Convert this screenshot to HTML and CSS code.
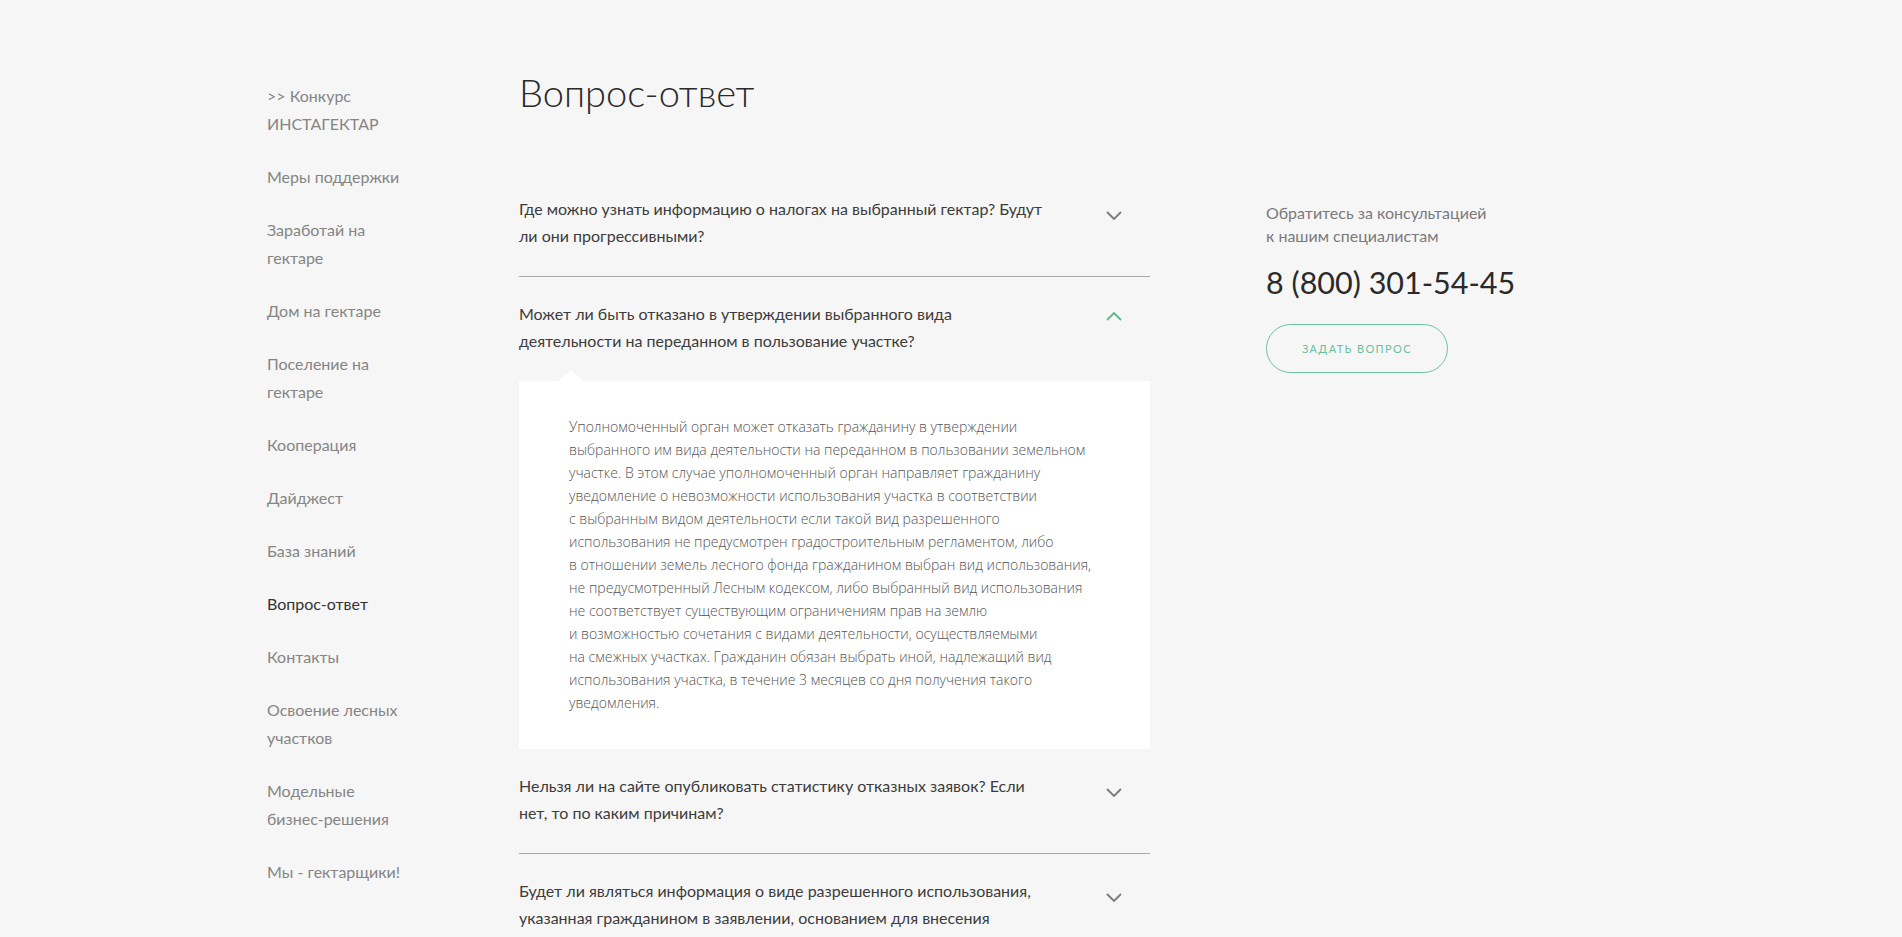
FILE: index.html
```html
<!DOCTYPE html>
<html lang="ru">
<head>
<meta charset="utf-8">
<title>Вопрос-ответ</title>
<link rel="stylesheet" href="styles.css">
</head>
<body>
<div class="page">
  <nav class="side">
    <a class="side-link" href="#">&gt;&gt; Конкурс ИНСТАГЕКТАР</a>
    <a class="side-link" href="#"><span class="nowrap">Меры поддержки</span></a>
    <a class="side-link" href="#">Заработай на гектаре</a>
    <a class="side-link" href="#"><span class="nowrap">Дом на гектаре</span></a>
    <a class="side-link" href="#">Поселение на гектаре</a>
    <a class="side-link" href="#">Кооперация</a>
    <a class="side-link" href="#">Дайджест</a>
    <a class="side-link" href="#">База знаний</a>
    <a class="side-link active" href="#">Вопрос-ответ</a>
    <a class="side-link" href="#">Контакты</a>
    <a class="side-link" href="#"><span class="nowrap">Освоение лесных</span> участков</a>
    <a class="side-link" href="#">Модельные <span class="nowrap">бизнес-решения</span></a>
    <a class="side-link" href="#"><span class="nowrap">Мы - гектарщики!</span></a>
  </nav>
  <main class="main">
    <h1 class="title">Вопрос-ответ</h1>
    <div class="row">
      <div class="faq">
        <div class="item">
          <div class="q">
            <div class="q-text">Где можно узнать информацию о налогах на выбранный гектар? Будут ли они прогрессивными?</div>
            <svg class="chev" width="16" height="9" viewBox="0 0 16 9"><path d="M1 1 L8 8 L15 1" fill="none" stroke="#7a7a7a" stroke-width="1.8"/></svg>
          </div>
        </div>
        <div class="item open">
          <div class="q">
            <div class="q-text">Может ли быть отказано в утверждении выбранного вида деятельности на переданном в пользование участке?</div>
            <svg class="chev chev-up" width="16" height="9" viewBox="0 0 16 9"><path d="M1 8 L8 1 L15 8" fill="none" stroke="#5cb893" stroke-width="1.8"/></svg>
          </div>
          <div class="answer">
            <p class="answer-text">Уполномоченный орган может отказать гражданину в&nbsp;утверждении<br>выбранного им вида деятельности на переданном в&nbsp;пользовании земельном<br>участке. В&nbsp;этом случае уполномоченный орган направляет гражданину<br>уведомление о&nbsp;невозможности использования участка в&nbsp;соответствии<br>с&nbsp;выбранным видом деятельности если такой вид разрешенного<br>использования не&nbsp;предусмотрен градостроительным регламентом, либо<br>в&nbsp;отношении земель лесного фонда гражданином выбран вид использования,<br>не&nbsp;предусмотренный Лесным кодексом, либо выбранный вид использования<br>не&nbsp;соответствует существующим ограничениям прав на&nbsp;землю<br>и&nbsp;возможностью сочетания с&nbsp;видами деятельности, осуществляемыми<br>на&nbsp;смежных участках. Гражданин обязан выбрать иной, надлежащий вид<br>использования участка, в&nbsp;течение 3&nbsp;месяцев со&nbsp;дня получения такого<br>уведомления.</p>
          </div>
        </div>
        <div class="item">
          <div class="q">
            <div class="q-text">Нельзя ли на сайте опубликовать статистику отказных заявок? Если нет, то по каким причинам?</div>
            <svg class="chev" width="16" height="9" viewBox="0 0 16 9"><path d="M1 1 L8 8 L15 1" fill="none" stroke="#7a7a7a" stroke-width="1.8"/></svg>
          </div>
        </div>
        <div class="item">
          <div class="q">
            <div class="q-text">Будет ли являться информация о виде разрешенного использования, указанная гражданином в заявлении, основанием для внесения</div>
            <svg class="chev" width="16" height="9" viewBox="0 0 16 9"><path d="M1 1 L8 8 L15 1" fill="none" stroke="#7a7a7a" stroke-width="1.8"/></svg>
          </div>
        </div>
      </div>
      <aside class="aside">
        <p class="aside-text">Обратитесь за консультацией<br>к нашим специалистам</p>
        <div class="phone">8 (800) 301-54-45</div>
        <a class="btn" href="#">Задать вопрос</a>
      </aside>
    </div>
  </main>
</div>
</body>
</html>
```

FILE: styles.css
```css
html, body {
  margin: 0;
  padding: 0;
  background: #f6f6f6;
}
body {
  font-family: Lato, "Noto Sans", sans-serif;
  color: #333;
}
.page {
  width: 1368px;
  margin: 0 auto;
  padding-top: 70px;
  display: grid;
  grid-template-columns: 252px 1fr;
}
.side {
  display: flex;
  flex-direction: column;
  gap: 25px;
  padding-top: 12px;
}
.side-link {
  display: block;
  width: 140px;
  font-size: 16px;
  line-height: 28px;
  color: #858585;
  text-decoration: none;
}
.side-link.active {
  color: #333;
}
.nowrap {
  white-space: nowrap;
}
.title {
  margin: 0;
  font-size: 38px;
  line-height: 44px;
  font-weight: 300;
  color: #2a2a2a;
}
.row {
  display: flex;
  gap: 116px;
  margin-top: 58px;
}
.faq {
  width: 631px;
  flex: none;
}
.q {
  display: flex;
  justify-content: space-between;
  align-items: flex-start;
  padding: 23px 28px 27px 0;
}
.item {
  border-bottom: 1px solid #a8a8a8;
}
.item.open {
  border-bottom: none;
}
.q-text {
  width: 530px;
  font-size: 16px;
  line-height: 27px;
  color: #3c3c3c;
}
.chev {
  flex: none;
  margin-top: 16px;
}
.chev-up {
  margin-top: 12px;
}
.answer {
  position: relative;
  background: #fff;
  padding: 34px 50px 35px;
}
.answer::before {
  content: "";
  position: absolute;
  top: -11px;
  left: 40px;
  border-left: 12px solid transparent;
  border-right: 12px solid transparent;
  border-bottom: 11px solid #fff;
}
.answer-text {
  margin: 0;
  font-family: "Open Sans", sans-serif;
  font-weight: 300;
  font-size: 14px;
  line-height: 23px;
  color: #555;
  white-space: nowrap;
}
.aside {
  padding-top: 29px;
}
.aside-text {
  margin: 0;
  font-size: 16px;
  line-height: 23px;
  color: #7a7a7a;
}
.phone {
  margin-top: 17px;
  font-size: 30.5px;
  line-height: 36px;
  color: #2a2a2a;
}
.btn {
  display: flex;
  align-items: center;
  justify-content: center;
  margin-top: 24px;
  width: 180px;
  height: 47px;
  border: 1px solid #6cc3a0;
  border-radius: 25px;
  font-size: 11px;
  letter-spacing: 1.4px;
  text-transform: uppercase;
  color: #6cbf9e;
  text-decoration: none;
}
```
